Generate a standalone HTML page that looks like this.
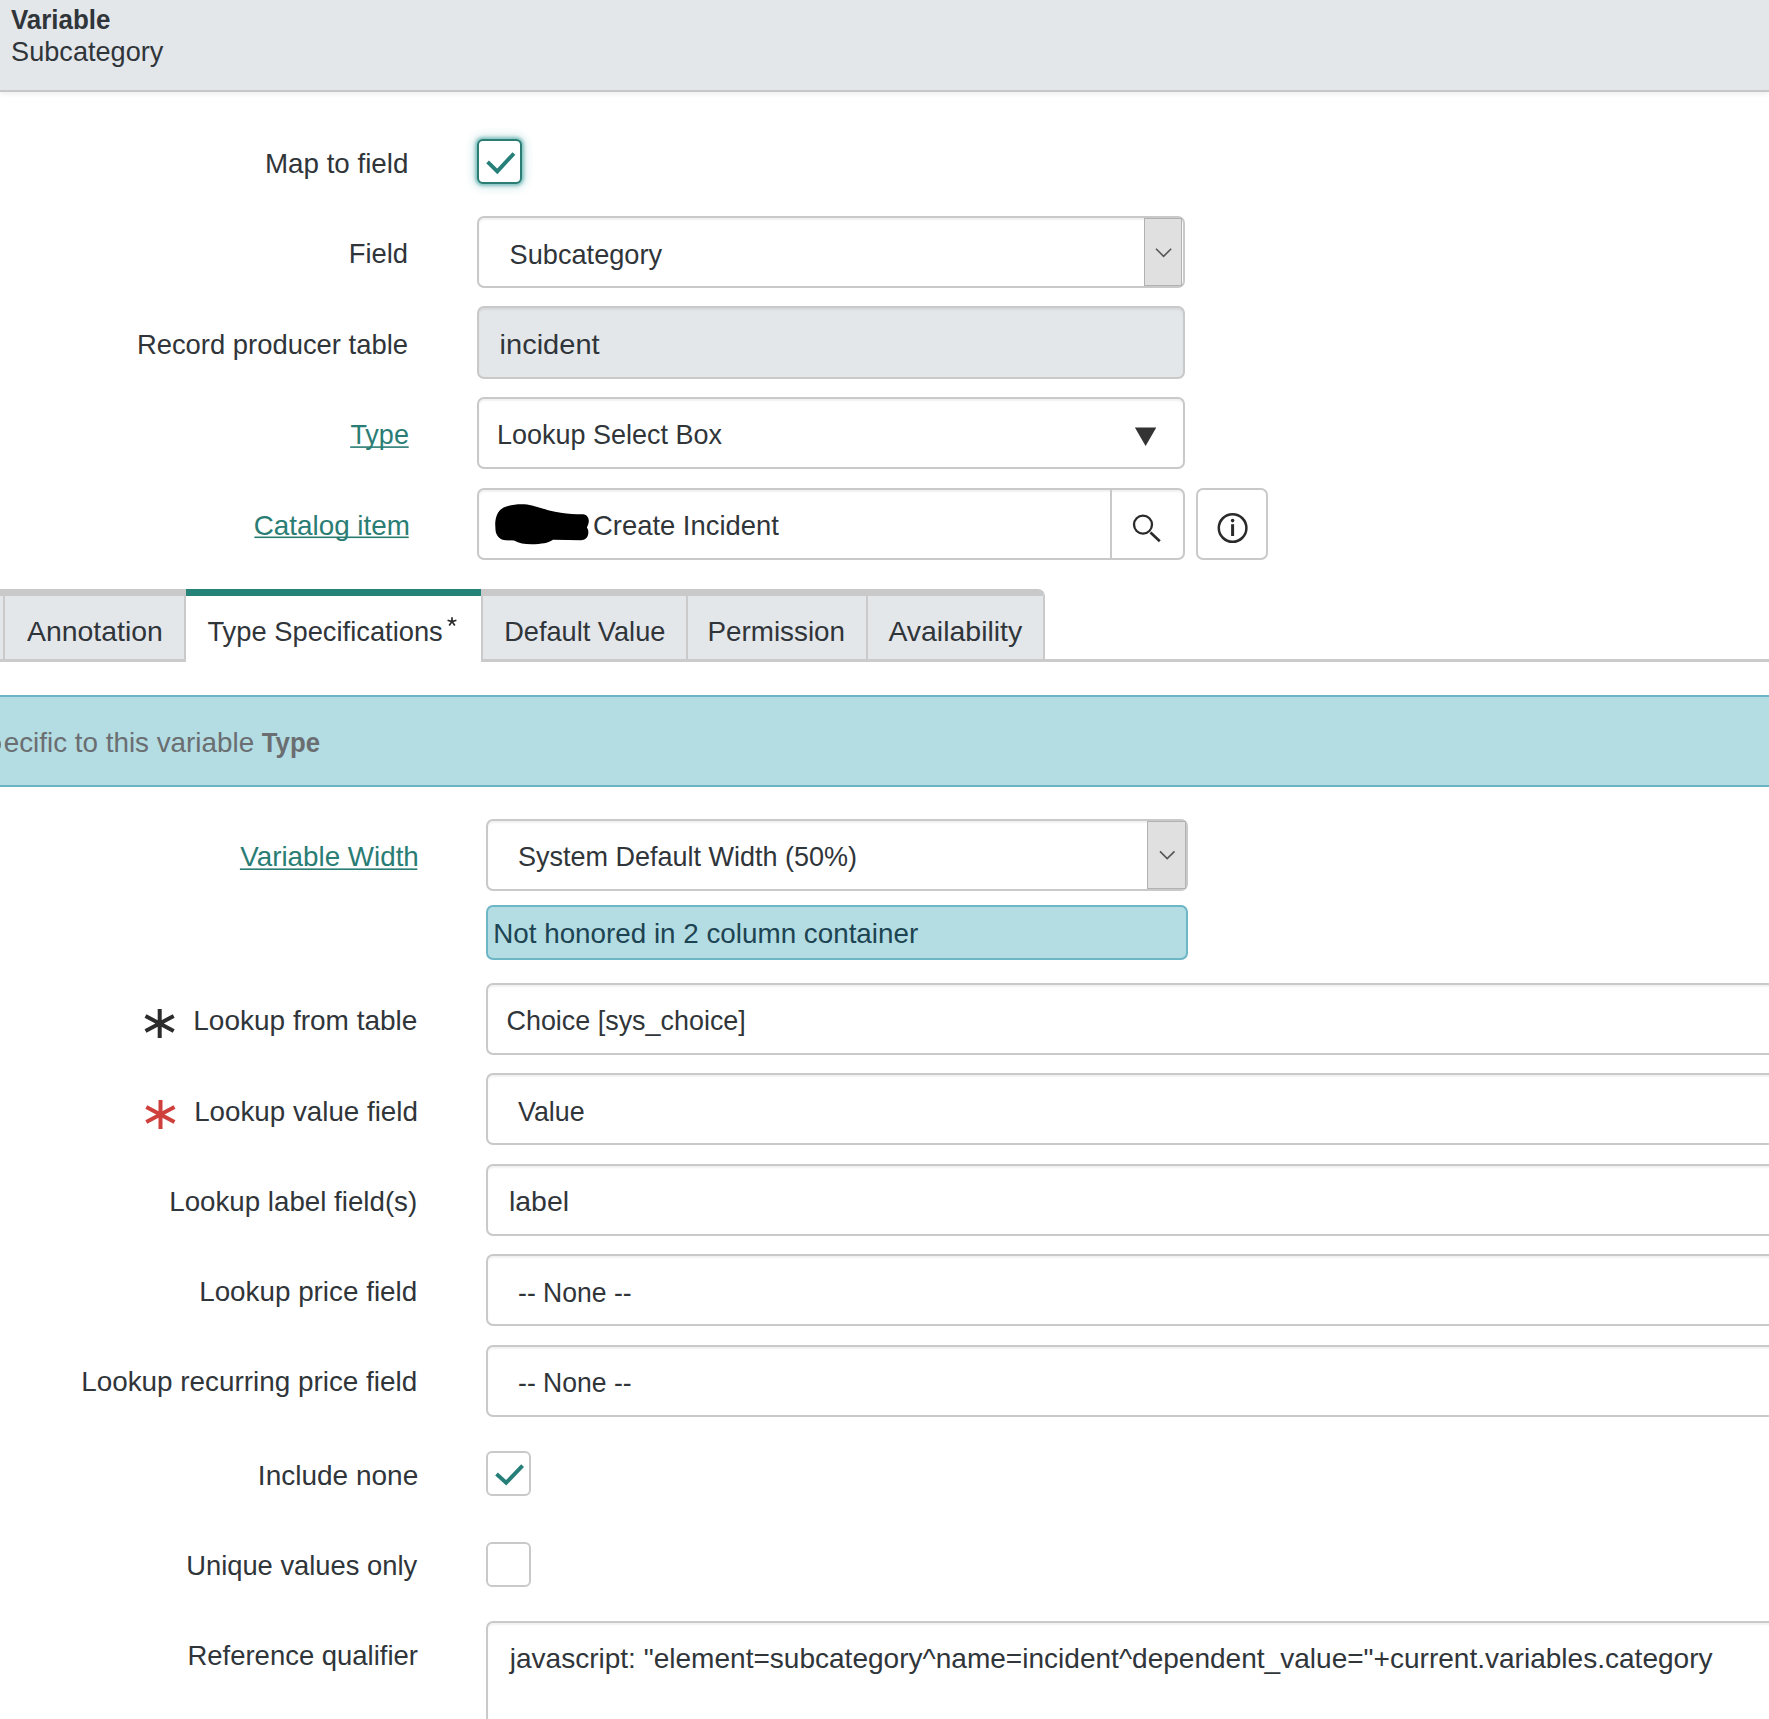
<!DOCTYPE html>
<html><head><meta charset="utf-8"><style>
*{margin:0;padding:0;box-sizing:border-box}
html,body{width:1769px;height:1719px;overflow:hidden;background:#fff;font-family:"Liberation Sans",sans-serif}
.a{position:absolute}
.inp{position:absolute;border:2px solid #c9c9c9;border-radius:7px;background:#fff;box-shadow:inset 0 2px 2px rgba(0,0,0,.06)}
.cb{position:absolute;border:2px solid #c9c9c9;border-radius:6px;background:#fff}
svg.ov{position:absolute;left:0;top:0}
</style></head>
<body>
<div class="a" style="left:0;top:0;width:1769px;height:91.5px;background:#e4e7ea;border-bottom:2px solid #c6c7c9;box-shadow:0 2px 5px rgba(0,0,0,.07)"></div>
<div class="cb" style="left:477px;top:139px;width:44.5px;height:44.5px;border-color:#2b7d74;box-shadow:0 0 3px 2px rgba(50,155,155,.5),0 0 9px 4px rgba(40,140,140,.2)"></div>
<div class="inp" style="left:476.5px;top:216px;width:708.0px;height:72px;overflow:hidden"></div>
<div class="a" style="left:1144.3px;top:218px;width:38.2px;height:68px;background:#e0e0e0;border:1px solid #b2b2b2"></div>
<div class="inp" style="left:476.5px;top:306.3px;width:708.0px;height:72.5px;background:#e4e7ea"></div>
<div class="inp" style="left:476.5px;top:396.9px;width:708.0px;height:72.0px;"></div>
<div class="inp" style="left:476.5px;top:487.5px;width:708.0px;height:72.0px;"></div>
<div class="a" style="left:1110px;top:489.5px;width:2px;height:68.0px;background:#c9c9c9"></div>
<div class="inp" style="left:1196px;top:487.5px;width:71.5px;height:72.0px;box-shadow:none"></div>
<div class="a" style="left:0;top:659px;width:1769px;height:2.5px;background:#cbcbcb"></div>
<div class="a" style="left:-20px;top:589px;width:25px;height:72px;background:#e4e7ea;border-top:7px solid #c9c9c9;border-right:2px solid #cacaca;border-bottom:2.5px solid #cbcbcb;"></div>
<div class="a" style="left:5px;top:589px;width:180.5px;height:72px;background:#e4e7ea;border-top:7px solid #c9c9c9;border-right:2px solid #cacaca;border-bottom:2.5px solid #cbcbcb;"></div>
<div class="a" style="left:185.5px;top:589px;width:295.5px;height:73px;background:#fff;border-top:7px solid #268377"></div>
<div class="a" style="left:481px;top:589px;width:207px;height:72px;background:#e4e7ea;border-top:7px solid #c9c9c9;border-right:2px solid #cacaca;border-bottom:2.5px solid #cbcbcb;border-left:2px solid #cacaca;"></div>
<div class="a" style="left:688px;top:589px;width:180px;height:72px;background:#e4e7ea;border-top:7px solid #c9c9c9;border-right:2px solid #cacaca;border-bottom:2.5px solid #cbcbcb;"></div>
<div class="a" style="left:868px;top:589px;width:177px;height:72px;background:#e4e7ea;border-top:7px solid #c9c9c9;border-right:2px solid #cacaca;border-bottom:2.5px solid #cbcbcb;border-top-right-radius:7px;"></div>
<div class="a" style="left:0;top:695px;width:1769px;height:92px;background:#b3dce3;border-top:2px solid #6ab4c5;border-bottom:2px solid #6ab4c5"></div>
<div class="inp" style="left:486px;top:818.8px;width:702px;height:72.2px;"></div>
<div class="a" style="left:1147px;top:820.8px;width:39px;height:68.2px;background:#e0e0e0;border:1px solid #b2b2b2"></div>
<div class="a" style="left:486px;top:904.8px;width:702px;height:55.2px;background:#b3dce3;border:2px solid #6db6c6;border-radius:7px"></div>
<div class="inp" style="left:486px;top:982.7px;width:1314px;height:72.0px;"></div>
<div class="inp" style="left:486px;top:1073.2px;width:1314px;height:72.0px;"></div>
<div class="inp" style="left:486px;top:1163.6px;width:1314px;height:72.0px;"></div>
<div class="inp" style="left:486px;top:1254.1px;width:1314px;height:72.0px;"></div>
<div class="inp" style="left:486px;top:1344.5px;width:1314px;height:72.0px;"></div>
<div class="cb" style="left:486px;top:1451.2px;width:44.7px;height:44.7px;"></div>
<div class="cb" style="left:486px;top:1542px;width:44.7px;height:44.5px;"></div>
<div class="inp" style="left:486px;top:1621px;width:1314px;height:139px;"></div>
<svg class="ov" width="1769" height="1719" viewBox="0 0 1769 1719" font-family="Liberation Sans, sans-serif">
<path d="M-4 738.8 C0.6 739.5 1.4 749 -4 749.8" stroke="#687178" stroke-width="2.3" fill="none"/>
<path d="M1134.9 427.5 L1156.3 427.5 L1145.6 446.1 Z" fill="#333"/>
<path d="M1156 248.7 L1163.6 256.3 L1171.2 248.7" fill="none" stroke="#555" stroke-width="1.6"/>
<path d="M1160 851.4 L1167.2 858.6 L1174.5 851.4" fill="none" stroke="#555" stroke-width="1.6"/>
<path d="M487.6 161.9 L497.3 171.4 L513.9 153.5" fill="none" stroke="#277f79" stroke-width="3.9"/>
<path d="M496.5 1474 L506.2 1482.7 L522.6 1465.7" fill="none" stroke="#277f79" stroke-width="3.9"/>
<circle cx="1143" cy="524.6" r="9" fill="none" stroke="#2a2a2a" stroke-width="2.3"/>
<path d="M1150.5 532.5 L1159.8 541.2" stroke="#2a2a2a" stroke-width="2.7"/>
<circle cx="1232.6" cy="528" r="13.8" fill="none" stroke="#2a2a2a" stroke-width="2.5"/>
<circle cx="1232.6" cy="520.6" r="1.8" fill="#2a2a2a"/>
<path d="M1232.6 524.2 L1232.6 536" stroke="#2a2a2a" stroke-width="3"/>
<g stroke="#2c2c2c" stroke-width="4"><path d="M159.7 1009 L159.7 1038 M145.5 1016 L173.7 1031 M145.5 1031 L173.7 1016"/></g>
<g stroke="#cf3f3b" stroke-width="4"><path d="M160.5 1100 L160.5 1129 M146.3 1107 L174.5 1122 M146.3 1122 L174.5 1107"/></g>
<g stroke="#2c2c2c" stroke-width="1.7" stroke-linecap="butt"><path d="M452 621.6 L452 617.2 M452 621.6 L456.4 620.2 M452 621.6 L447.6 620.2 M452 621.6 L454.8 625.6 M452 621.6 L449.2 625.6"/></g>
<rect x="350.2" y="446.3" width="58.5" height="1.6" fill="#2a7d74"/>
<rect x="254.4" y="536.5" width="154.3" height="1.6" fill="#2a7d74"/>
<rect x="239.9" y="868.4" width="177.5" height="1.6" fill="#2a7d74"/>
<path d="M495.2 524 C495.5 515 499 508 508 506 C515 504 525 503.5 532 505.5 C540 507.5 548 510.5 555 511.8 C563 513.3 570 514.2 577 514.3 L583 514.3 C587 514.5 589 518 588.8 521.5 C588.7 524.5 587 526.5 586.9 527.7 C588.5 529.5 588.5 532 588.2 534 C587.5 538 585 540 581 540.2 L553 539.7 C550 542 545 543.6 535 544.2 C527 544.6 520 544 514 540.5 L506 540.3 C500 540 496 536 495.5 530 Z" fill="#000"/>
<text x="10.90" y="29.20" textLength="99.52" lengthAdjust="spacingAndGlyphs" fill="#30353a" font-size="28" font-weight="bold">Variable</text>
<text x="11.10" y="60.50" textLength="152.22" lengthAdjust="spacingAndGlyphs" fill="#30353a" font-size="28">Subcategory</text>
<text x="264.95" y="172.80" textLength="143.48" lengthAdjust="spacingAndGlyphs" fill="#30353a" font-size="28">Map to field</text>
<text x="348.71" y="262.90" textLength="59.33" lengthAdjust="spacingAndGlyphs" fill="#30353a" font-size="28">Field</text>
<text x="136.89" y="353.80" textLength="271.12" lengthAdjust="spacingAndGlyphs" fill="#30353a" font-size="28">Record producer table</text>
<text x="350.39" y="443.75" textLength="58.52" lengthAdjust="spacingAndGlyphs" fill="#2a7d74" font-size="28">Type</text>
<text x="253.79" y="534.80" textLength="156.12" lengthAdjust="spacingAndGlyphs" fill="#2a7d74" font-size="28">Catalog item</text>
<text x="509.60" y="263.50" textLength="152.52" lengthAdjust="spacingAndGlyphs" fill="#30353a" font-size="28">Subcategory</text>
<text x="499.58" y="353.90" textLength="100.03" lengthAdjust="spacingAndGlyphs" fill="#30353a" font-size="28">incident</text>
<text x="496.98" y="444.00" textLength="225.01" lengthAdjust="spacingAndGlyphs" fill="#30353a" font-size="28">Lookup Select Box</text>
<text x="593.00" y="534.50" textLength="185.80" lengthAdjust="spacingAndGlyphs" fill="#30353a" font-size="28">Create Incident</text>
<text x="27.00" y="640.60" textLength="135.90" lengthAdjust="spacingAndGlyphs" fill="#30353a" font-size="28">Annotation</text>
<text x="207.40" y="640.60" textLength="235.40" lengthAdjust="spacingAndGlyphs" fill="#30353a" font-size="28">Type Specifications</text>
<text x="504.18" y="640.60" textLength="161.21" lengthAdjust="spacingAndGlyphs" fill="#30353a" font-size="28">Default Value</text>
<text x="707.46" y="640.60" textLength="137.55" lengthAdjust="spacingAndGlyphs" fill="#30353a" font-size="28">Permission</text>
<text x="888.40" y="640.60" textLength="133.83" lengthAdjust="spacingAndGlyphs" fill="#30353a" font-size="28">Availability</text>
<text x="3.70" y="751.60" textLength="250.42" lengthAdjust="spacingAndGlyphs" fill="#6b6e71" font-size="28">ecific to this variable</text>
<text x="261.79" y="751.60" textLength="58.19" lengthAdjust="spacingAndGlyphs" fill="#6b6e71" font-size="28" font-weight="bold">Type</text>
<text x="240.30" y="866.00" textLength="178.53" lengthAdjust="spacingAndGlyphs" fill="#2a7d74" font-size="28">Variable Width</text>
<text x="193.28" y="1029.70" textLength="224.11" lengthAdjust="spacingAndGlyphs" fill="#30353a" font-size="28">Lookup from table</text>
<text x="194.18" y="1120.60" textLength="223.71" lengthAdjust="spacingAndGlyphs" fill="#30353a" font-size="28">Lookup value field</text>
<text x="169.28" y="1211.40" textLength="247.93" lengthAdjust="spacingAndGlyphs" fill="#30353a" font-size="28">Lookup label field(s)</text>
<text x="199.18" y="1301.30" textLength="218.01" lengthAdjust="spacingAndGlyphs" fill="#30353a" font-size="28">Lookup price field</text>
<text x="81.19" y="1391.30" textLength="336.01" lengthAdjust="spacingAndGlyphs" fill="#30353a" font-size="28">Lookup recurring price field</text>
<text x="257.86" y="1485.00" textLength="160.37" lengthAdjust="spacingAndGlyphs" fill="#30353a" font-size="28">Include none</text>
<text x="186.19" y="1575.20" textLength="231.01" lengthAdjust="spacingAndGlyphs" fill="#30353a" font-size="28">Unique values only</text>
<text x="187.48" y="1665.30" textLength="230.49" lengthAdjust="spacingAndGlyphs" fill="#30353a" font-size="28">Reference qualifier</text>
<text x="517.90" y="866.10" textLength="339.19" lengthAdjust="spacingAndGlyphs" fill="#30353a" font-size="28">System Default Width (50%)</text>
<text x="493.20" y="942.70" textLength="425.00" lengthAdjust="spacingAndGlyphs" fill="#1d4452" font-size="28">Not honored in 2 column container</text>
<text x="506.49" y="1030.40" textLength="239.33" lengthAdjust="spacingAndGlyphs" fill="#30353a" font-size="28">Choice [sys_choice]</text>
<text x="518.00" y="1120.60" textLength="66.69" lengthAdjust="spacingAndGlyphs" fill="#30353a" font-size="28">Value</text>
<text x="508.96" y="1210.80" textLength="60.08" lengthAdjust="spacingAndGlyphs" fill="#30353a" font-size="28">label</text>
<text x="518.09" y="1301.80" textLength="113.52" lengthAdjust="spacingAndGlyphs" fill="#30353a" font-size="28">-- None --</text>
<text x="518.09" y="1392.00" textLength="113.52" lengthAdjust="spacingAndGlyphs" fill="#30353a" font-size="28">-- None --</text>
<text x="509.70" y="1667.50" textLength="1202.88" lengthAdjust="spacingAndGlyphs" fill="#30353a" font-size="28">javascript: &quot;element=subcategory^name=incident^dependent_value=&quot;+current.variables.category</text></svg>
</body></html>
